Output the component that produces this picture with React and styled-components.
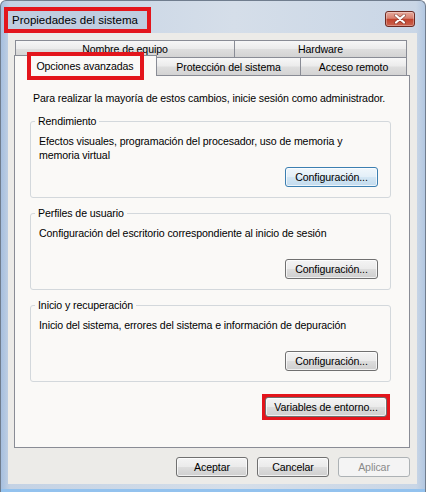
import React from 'react';
import styled, { createGlobalStyle, css } from 'styled-components';

const GlobalStyle = createGlobalStyle`
  html, body {
    margin: 0;
    padding: 0;
    background: #ffffff;
  }
`;

const Window = styled.div`
  box-sizing: border-box;
  width: 426px;
  height: 492px;
  display: flex;
  flex-direction: column;
  border: 1px solid #707d8e;
  border-bottom: none;
  border-radius: 6px 6px 0 0;
  background: linear-gradient(to right, #a6bfdf 0, #c4d2e4 9px, #d5dee9 55%, #c9d6e6 calc(100% - 9px), #b2c7e1 100%);
  box-shadow: inset 0 -3px 0 #93c2ee;
  font-family: "Liberation Sans", Arial, sans-serif;
  font-size: 10.6px;
  line-height: 14px;
  letter-spacing: -0.1px;
  color: #000;
`;

const TitleBar = styled.div`
  box-sizing: border-box;
  flex: none;
  height: 32px;
  display: flex;
  justify-content: space-between;
  align-items: flex-start;
  padding: 10px 10px 0 7px;
`;

const Title = styled.div`
  height: 18px;
  line-height: 18px;
  padding: 0 9px 0 4px;
  font-size: 11.5px;
  letter-spacing: 0;
  background: #bfcde0;
  outline: 4px solid #e3151c;
`;

const CloseButton = styled.div`
  box-sizing: border-box;
  width: 30px;
  height: 16px;
  display: flex;
  align-items: center;
  justify-content: center;
  border: 1px solid #6d2a22;
  border-radius: 3px;
  background: linear-gradient(#e7aa9d 0%, #d7806f 45%, #c2432d 52%, #cb6450 100%);
  box-shadow: inset 0 0 0 1px rgba(255, 255, 255, 0.3);
`;

const Client = styled.div`
  flex: 1;
  min-height: 0;
  display: flex;
  flex-direction: column;
  margin: 0 8px 8px 7px;
  padding: 7px 7px 7px 6px;
  background: #ecebe8;
`;

const TabStrip = styled.div`
  position: relative;
  z-index: 1;
  display: flex;
  flex-direction: column;
  padding-right: 3px;
`;

const TabRow = styled.div`
  display: flex;
  height: ${p => p.$h}px;
  padding-left: ${p => p.$indent || 0}px;
`;

const Tab = styled.div`
  box-sizing: border-box;
  position: relative;
  width: ${p => p.$w}px;
  height: 100%;
  margin-left: -1px;
  display: flex;
  align-items: center;
  justify-content: center;
  border: 1px solid #898c95;
  border-bottom: none;
  background: linear-gradient(#f7f7f7 0%, #ebebeb 48%, #dedede 52%, #d3d3d3 100%);
  &:first-child {
    margin-left: 0;
  }
  ${p => p.$active && css`
    z-index: 2;
    height: 21px;
    margin-top: -2px;
    background: #faf9f7;
  `}
`;

const Marked = styled.span`
  padding: 3px 6px 3px 5px;
  outline: 4px solid #e3151c;
`;

const Panel = styled.div`
  flex: 1;
  min-height: 0;
  display: flex;
  flex-direction: column;
  border: 1px solid #898c95;
  background: #faf9f7;
  padding: 15px 18px 0 15px;
`;

const Intro = styled.div`
  margin-left: 3px;
  white-space: nowrap;
`;

const Group = styled.fieldset`
  margin: ${p => p.$first ? 9 : 8}px 0 0;
  padding: 6px 12px 10px 8px;
  min-width: 0;
  border: 1px solid #d3d8dc;
  border-radius: 3px;
`;

const Legend = styled.legend`
  padding: 0 3px;
  margin-left: -4px;
  line-height: 14px;
`;

const GroupBody = styled.div`
  height: 53px;
  display: flex;
  flex-direction: column;
`;

const Button = styled.button`
  box-sizing: border-box;
  width: ${p => p.$w}px;
  height: 20px;
  padding: 0;
  display: flex;
  align-items: center;
  justify-content: center;
  font: inherit;
  letter-spacing: inherit;
  color: #000;
  border: 1px solid #707070;
  border-radius: 3px;
  background: linear-gradient(#f4f4f4 0%, #ebebeb 48%, #dddddd 52%, #cfcfcf 100%);
  box-shadow: inset 0 0 0 1px rgba(255, 255, 255, 0.7);
  ${p => p.$end && css`
    margin-top: auto;
    align-self: flex-end;
  `}
  ${p => p.$focus && css`
    border-color: #3c7fb1;
    background: linear-gradient(#f0f7fc 0%, #e3eff8 48%, #d3e6f4 52%, #c2dbee 100%);
  `}
  ${p => p.$inFrame && css`
    margin: -1px;
  `}
  ${p => p.disabled && css`
    color: #8a8a8a;
    border-color: #adb2b5;
    background: #f4f4f4;
    box-shadow: none;
  `}
`;

const MarkFrame = styled.div`
  align-self: flex-end;
  display: flex;
  margin: 12px 1px 0 0;
  border: 4px solid #e3151c;
`;

const Footer = styled.div`
  display: flex;
  justify-content: flex-end;
  gap: 9px;
  margin-top: 9px;
`;

const CloseIcon = () => (
  <svg width="12" height="10" viewBox="0 0 12 10">
    <path d="M2 1.5 L10 8.5 M10 1.5 L2 8.5" stroke="#5b231c" strokeWidth="3.6" strokeLinecap="round" opacity="0.55" />
    <path d="M2 1.5 L10 8.5 M10 1.5 L2 8.5" stroke="#ffffff" strokeWidth="2.2" strokeLinecap="round" />
  </svg>
);

const groups = [
  {
    title: 'Rendimiento',
    text: ['Efectos visuales, programación del procesador, uso de memoria y', 'memoria virtual'],
    focus: true,
  },
  {
    title: 'Perfiles de usuario',
    text: ['Configuración del escritorio correspondiente al inicio de sesión'],
  },
  {
    title: 'Inicio y recuperación',
    text: ['Inicio del sistema, errores del sistema e información de depuración'],
  },
];

const App = () => (
  <>
    <GlobalStyle />
    <Window>
      <TitleBar>
        <Title>Propiedades del sistema</Title>
        <CloseButton>
          <CloseIcon />
        </CloseButton>
      </TitleBar>
      <Client>
        <TabStrip>
          <TabRow $h={17} $indent={1}>
            <Tab $w={220}>Nombre de equipo</Tab>
            <Tab $w={173}>Hardware</Tab>
          </TabRow>
          <TabRow $h={18}>
            <Tab $w={143} $active>
              <Marked>Opciones avanzadas</Marked>
            </Tab>
            <Tab $w={145}>Protección del sistema</Tab>
            <Tab $w={107}>Acceso remoto</Tab>
          </TabRow>
        </TabStrip>
        <Panel>
          <Intro>Para realizar la mayoría de estos cambios, inicie sesión como administrador.</Intro>
          {groups.map((g, i) => (
            <Group key={g.title} $first={i === 0}>
              <Legend>{g.title}</Legend>
              <GroupBody>
                <div>
                  {g.text.map(line => (
                    <div key={line}>{line}</div>
                  ))}
                </div>
                <Button $w={93} $end $focus={g.focus}>Configuración...</Button>
              </GroupBody>
            </Group>
          ))}
          <MarkFrame>
            <Button $w={122} $inFrame>Variables de entorno...</Button>
          </MarkFrame>
        </Panel>
        <Footer>
          <Button $w={72}>Aceptar</Button>
          <Button $w={72}>Cancelar</Button>
          <Button $w={72} disabled>Aplicar</Button>
        </Footer>
      </Client>
    </Window>
  </>
);

export default App;
